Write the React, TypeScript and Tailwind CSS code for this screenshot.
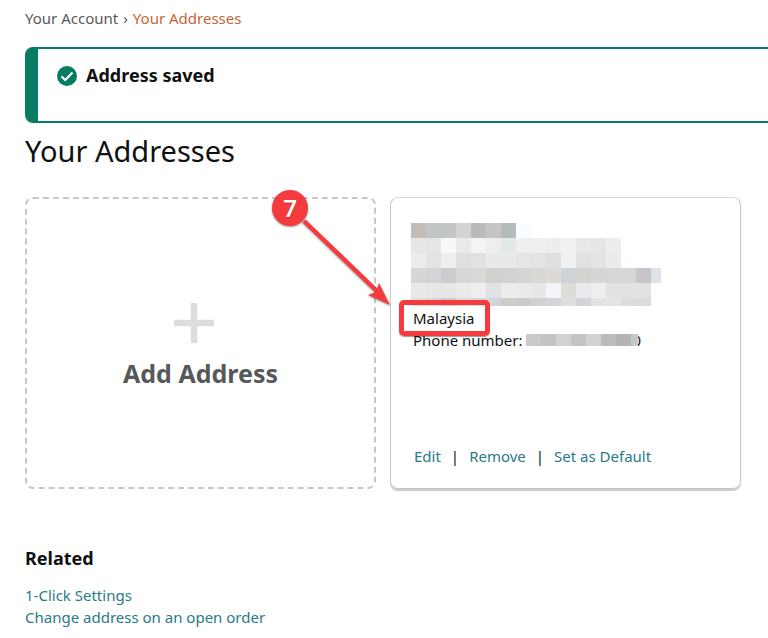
import React from "react";

const nameCells = [
  ["#c2bdb6", "#c0c6c8", "#c5c5c5", "#d3d3d3", "#bababa", "#c8c3c5", "#b5baba", "#f8fdff"],
  ["#e7e7e7", "#e4e6e5", "#f8f8f8", "#e9ebe8", "#f3f5f4", "#eeeeee", "#e3e8e9", "#efefef", "#eeeff2", "#ededee", "#f1f1f1", "#e8e8eb", "#e6e6e6", "#ededed"],
  ["#ececec", "#e3e3e3", "#eceef0", "#dde0dc", "#e0e2e1", "#e9e9eb", "#e8eae7", "#e5e5e5", "#e3e3e5", "#dde0df", "#f0f2f1", "#e1e1e1", "#e5e3e4", "#ebebeb", "#fcfffe"],
  ["#d5d7d4", "#d3d4d9", "#cccccc", "#d5d9db", "#d9d9da", "#d3d1ce", "#d2d2d1", "#d5d4d1", "#d5dad5", "#dcd9d6", "#ced3d8", "#d3d3d0", "#d5d7d5", "#d9d6d8", "#d6d7d9", "#c8c4ca", "#dfe2e8"],
  ["#e9e9e9", "#e7e7e7", "#e5e8e6", "#eaecea", "#f0eeec", "#dfe1e5", "#ececea", "#ebebeb", "#e5e7ea", "#f3f5f8", "#dcddd9", "#e9eaee", "#eeeeee", "#e2e2e2", "#e2e2e2", "#e0e3e1"],
  ["#dddddd", "#d8d8d8", "#cacdcf", "#d8d8d8", "#d5d5d5", "#d2d4d8", "#cccccb", "#cbcbcb", "#d2d2d4", "#d3d6d9", "#dedfde", "#d3d4d9", "#e3e3e3", "#e3e4e6", "#dddddb", "#dadcdb"],
];

const phoneCells = ["#cbcbcb", "#c3c3c3", "#d4d1d2", "#c4c4c6", "#d2d2cf", "#bbbbbb", "#b5b3b6"];

const linkClass = "text-[#2a7a87] hover:underline";

const Alert = () => {
  return (
    <div
      role="status"
      className="ml-[25px] mt-[18px] flex min-h-[76px] rounded-l-lg border-2 border-r-0 border-l-[13px] border-[#067d62] pl-[19px] pt-3"
    >
      <svg viewBox="0 0 20 20" className="mt-[5px] size-5 shrink-0" aria-hidden="true">
        <circle cx="10" cy="10" r="10" fill="#067d62" />
        <path d="M4.5 10.5 8.3 14 15.5 6.6" fill="none" stroke="#fff" strokeWidth="2.2" />
      </svg>
      <h4 className="ml-[9px] text-[18px] leading-7 font-bold">Address saved</h4>
    </div>
  );
};

const Callout = () => {
  return (
    <>
      <svg
        viewBox="0 0 124 124"
        className="pointer-events-none absolute -left-[120px] -top-[10px] w-[124px] drop-shadow-[0_1px_1px_rgba(0,0,0,0.4)]"
        aria-hidden="true"
      >
        <path d="M33 33 110 107" stroke="#f53b3d" strokeWidth="4.5" />
        <path d="M119 117 108 95 105 104 97 107Z" fill="#f53b3d" />
      </svg>
      <span className="absolute -left-[119px] -top-[8px] flex size-9 items-center justify-center rounded-full bg-[#f53b3d] text-[24px] font-semibold text-white shadow-[0_1px_2px_rgba(0,0,0,0.4)] text-shadow-sm">
        7
      </span>
    </>
  );
};

const AddressCard = () => {
  return (
    <div className="relative flex min-h-[292px] flex-col rounded-lg border border-[#c7c7c7] border-t-[#d8d8d8] px-[22px] pt-[25px] pb-[21px] shadow-[0_2px_1px_#c9c9c9]">
      <div className="-ml-[2px]" aria-label="Hidden name and address">
        {nameCells.map((row, i) => (
          <div key={i} className="flex">
            {row.map((color, j) => (
              <span
                key={j}
                className={`${i === 5 ? "h-2" : "h-[15px]"} ${j === 16 ? "w-[10px]" : "w-[15px]"}`}
                style={{ backgroundColor: color }}
              />
            ))}
          </div>
        ))}
      </div>
      <p className="mt-[1px] text-[15px] leading-[22px]">
        <span className="relative">
          Malaysia
          <span className="absolute -right-4 -left-[14px] -inset-y-2 rounded-[5px] border-[5px] border-[#f53b3d] shadow-[0_1px_1px_rgba(0,0,0,0.4)]" />
        </span>
      </p>
      <p className="flex items-center text-[15px] leading-[22px]">
        Phone number:
        <span className="z-10 -mr-[5px] ml-[3px] flex">
          {phoneCells.map((color, i) => (
            <span key={i} className="h-3 w-[15px]" style={{ backgroundColor: color }} />
          ))}
          <span className="h-3 w-[7px] bg-[#c5c9c8]" />
        </span>
        <span>0</span>
      </p>
      <div className="mt-auto flex pl-[1px] text-[15px] leading-[22px]">
        <a href="#edit" className={linkClass}>Edit</a>
        <span className="mx-[10px]">|</span>
        <a href="#remove" className={linkClass}>Remove</a>
        <span className="mx-[10px]">|</span>
        <a href="#default" className={linkClass}>Set as Default</a>
      </div>
      <Callout />
    </div>
  );
};

const App = () => {
  return (
    <main className="min-h-screen overflow-x-hidden bg-white pt-[7px] font-['Noto_Sans','Open_Sans',sans-serif] text-[#0f1111]">
      <nav aria-label="Breadcrumb" className="flex pl-[25px] text-[15px] leading-[22px]">
        <a href="#account" className="text-[#565959] hover:underline">Your Account</a>
        <span className="mx-[5px] text-[#565959]">›</span>
        <span className="text-[#c7653a]">Your Addresses</span>
      </nav>

      <Alert />

      <div className="pr-[27px] pl-[25px]">
        <h1 className="mt-[8px] text-[29px] leading-10">Your Addresses</h1>

        <div className="mt-[26px] grid grid-cols-2 gap-[14px]">
          <a
            href="#add"
            className="flex min-h-[292px] flex-col items-center rounded-lg border-2 border-dashed border-[#c7c7c7] pt-[104px]"
          >
            <svg viewBox="0 0 40 40" className="mr-[14px] size-10" aria-hidden="true">
              <path d="M20 0V40M0 20H40" stroke="#ddd" strokeWidth="6.5" />
            </svg>
            <h2 className="mt-3 text-[25px] leading-9 font-bold text-[#565959]">Add Address</h2>
          </a>
          <AddressCard />
        </div>

        <h3 className="mt-[55px] text-[18px] leading-7 font-bold">Related</h3>
        <ul className="mt-3 text-[15px] leading-[22px]">
          <li>
            <a href="#one-click" className={linkClass}>1-Click Settings</a>
          </li>
          <li>
            <a href="#open-order" className={linkClass}>Change address on an open order</a>
          </li>
        </ul>
      </div>
    </main>
  );
};

export default App;
